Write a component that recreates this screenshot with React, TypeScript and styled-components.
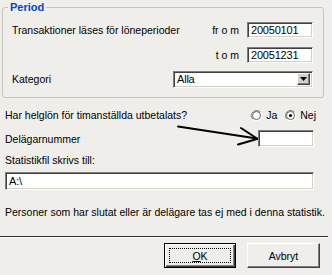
import styled, { createGlobalStyle } from "styled-components";

const GlobalStyle = createGlobalStyle`
  html, body {
    margin: 0;
    padding: 0;
    background: #efeeea;
  }
`;

const Dialog = styled.div`
  position: relative;
  width: 332px;
  height: 275px;
  box-sizing: border-box;
  background: #efeeea;
  font-family: "Liberation Sans", Arial, sans-serif;
  font-size: 10.5px;
  color: #000;
  overflow: hidden;
`;

const GroupBox = styled.div`
  position: relative;
  box-sizing: border-box;
  margin: 7px 8px 0 2px;
  height: 91px;
  padding: 14px 10px 0 9px;
  border: 1px solid #c6c5bc;
  border-radius: 3px;
`;

const Legend = styled.span`
  position: absolute;
  top: -7px;
  left: 5px;
  padding: 0 2px;
  background: #efeeea;
  color: #0046d5;
  font-size: 11px;
  font-weight: bold;
  line-height: 13px;
`;

const PeriodRow = styled.div<{ $gap?: number }>`
  display: flex;
  align-items: center;
  height: 16px;
  margin-top: ${(p) => p.$gap ?? 0}px;
`;

const RowLabel = styled.span`
  flex: 1;
  white-space: nowrap;
`;

const DateLabel = styled.span`
  margin-right: 8px;
  white-space: nowrap;
`;

const TextBox = styled.div<{ $width: number; $height: number }>`
  box-sizing: border-box;
  width: ${(p) => p.$width}px;
  height: ${(p) => p.$height}px;
  background: #fff;
  border: 1px solid;
  border-color: #808080 #ffffff #ffffff #808080;
  box-shadow: inset 1px 1px 0 #404040, inset -1px -1px 0 #d4d0c8;
  padding: 0 3px;
  display: flex;
  align-items: center;
  white-space: nowrap;
  font-size: 11px;
  letter-spacing: -0.2px;
`;

const Combo = styled(TextBox)`
  padding: 0 2px 0 3px;
  justify-content: space-between;
`;

const DropButton = styled.span`
  box-sizing: border-box;
  width: 13px;
  height: 12px;
  background: #d4d0c8;
  border: 1px solid;
  border-color: #ffffff #404040 #404040 #ffffff;
  box-shadow: inset -1px -1px 0 #808080;
  display: flex;
  align-items: center;
  justify-content: center;
`;

const Body = styled.div`
  padding: 0 18px 0 5px;
`;

const Line = styled.div<{ $gap: number; $height?: number }>`
  display: flex;
  align-items: center;
  justify-content: space-between;
  height: ${(p) => p.$height ?? 14}px;
  margin-top: ${(p) => p.$gap}px;
  white-space: nowrap;
`;

const Radios = styled.div`
  display: flex;
  align-items: center;
  margin-right: -2px;
`;

const RadioItem = styled.label<{ $gap?: number }>`
  display: flex;
  align-items: center;
  gap: 4px;
  margin-left: ${(p) => p.$gap ?? 0}px;
`;

const Separator = styled.div`
  margin: 17px 4px 0 0;
  border-top: 1px solid #303030;
  border-bottom: 1px solid #ffffff;
`;

const ButtonBar = styled.div`
  display: flex;
  justify-content: flex-end;
  gap: 11px;
  margin-top: 5px;
  padding-right: 12px;
`;

const Button = styled.button<{ $isDefault?: boolean; $width: number }>`
  box-sizing: border-box;
  width: ${(p) => p.$width}px;
  height: 25px;
  padding: 0;
  font: inherit;
  color: #000;
  background: #efeeea;
  border: 1px solid;
  border-color: ${(p) =>
    p.$isDefault ? "#000 #000 #000 #000" : "#ffffff #404040 #404040 #ffffff"};
  box-shadow: ${(p) =>
    p.$isDefault
      ? "inset 1px 1px 0 #fff, inset -1px -1px 0 #404040, inset -2px -2px 0 #808080"
      : "inset -1px -1px 0 #808080"};
  display: flex;
  align-items: center;
  justify-content: center;
`;

const FocusRing = styled.span`
  box-sizing: border-box;
  width: calc(100% - 8px);
  height: calc(100% - 8px);
  border: 1px dotted #000;
  display: flex;
  align-items: center;
  justify-content: center;
`;

const Arrow = styled.svg`
  position: absolute;
  left: 0;
  top: 0;
  pointer-events: none;
`;

const Radio = ({ checked }: { checked?: boolean }) => (
  <svg width="11" height="11" viewBox="0 0 11 11">
    <path d="M9.5 2.2 A5 5 0 0 0 1.8 9.2" stroke="#808080" fill="none" />
    <path d="M1.8 9.2 A5 5 0 0 0 9.5 2.2" stroke="#ffffff" fill="none" />
    <circle cx="5.5" cy="5.5" r="4" fill="#fff" stroke="#404040" strokeWidth="0.8" />
    {checked && <circle cx="5.5" cy="5.5" r="1.6" fill="#000" />}
  </svg>
);

export default function App() {
  return (
    <>
      <GlobalStyle />
      <Dialog>
        <GroupBox>
          <Legend>Period</Legend>
          <PeriodRow>
            <RowLabel>Transaktioner läses för löneperioder</RowLabel>
            <DateLabel>fr o m</DateLabel>
            <TextBox $width={66} $height={16}>20050101</TextBox>
          </PeriodRow>
          <PeriodRow $gap={9}>
            <RowLabel />
            <DateLabel>t o m</DateLabel>
            <TextBox $width={66} $height={16}>20051231</TextBox>
          </PeriodRow>
          <PeriodRow $gap={8}>
            <RowLabel>Kategori</RowLabel>
            <Combo $width={140} $height={17}>
              Alla
              <DropButton>
                <svg width="7" height="4" viewBox="0 0 7 4">
                  <path d="M0 0 H7 L3.5 4 Z" fill="#000" />
                </svg>
              </DropButton>
            </Combo>
          </PeriodRow>
        </GroupBox>

        <Body>
          <Line $gap={10}>
            <span>Har helglön för timanställda utbetalats?</span>
            <Radios>
              <RadioItem>
                <Radio />
                Ja
              </RadioItem>
              <RadioItem $gap={8}>
                <Radio checked />
                Nej
              </RadioItem>
            </Radios>
          </Line>
          <Line $gap={8} $height={17}>
            <span>Delägarnummer</span>
            <TextBox $width={56} $height={17} />
          </Line>
          <Line $gap={6}>
            <span>Statistikfil skrivs till:</span>
          </Line>
          <Line $gap={5} $height={18}>
            <TextBox $width={309} $height={18}>A:\</TextBox>
          </Line>
          <Line $gap={15}>
            <span>
              Personer som har slutat eller är delägare tas ej med i denna statistik.
            </span>
          </Line>
        </Body>

        <Separator />
        <ButtonBar>
          <Button $isDefault $width={72}>
            <FocusRing>
              <u>O</u>K
            </FocusRing>
          </Button>
          <Button $width={73}>Avbryt</Button>
        </ButtonBar>

        <Arrow width="332" height="275" viewBox="0 0 332 275">
          <g stroke="#000" strokeWidth="2" fill="none" strokeLinecap="round">
            <path d="M178 126.5 L257 138.5" />
            <path d="M241 128 L257 138.5" />
            <path d="M238 144.5 L257 139" />
          </g>
        </Arrow>
      </Dialog>
    </>
  );
}
